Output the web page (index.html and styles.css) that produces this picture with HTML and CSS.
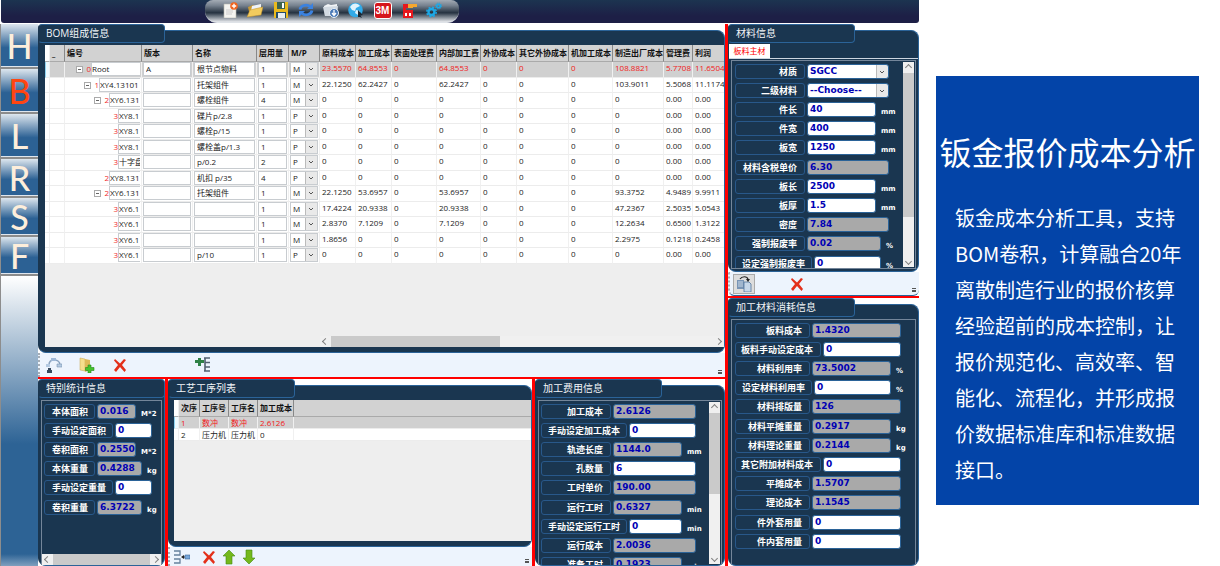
FILE: index.html
```html
<!DOCTYPE html>
<html lang="zh-CN">
<head>
    <meta charset="UTF-8">
    <meta name="viewport" content="width=device-width, initial-scale=1.0">
    <title>钣金报价成本分析</title>
    <link rel="stylesheet" href="styles.css">
</head>
<body>
    <div class="app">
        <header class="topbar">
            <div class="quickbar">
                <button aria-label="新建"><svg viewBox="0 0 16 16"><path d="M2 2h8l4 4v10H2z" fill="#f4f4f0" stroke="#b8b8b0" stroke-width=".6"/><path d="M4 8h7M4 10h7M4 12h6" stroke="#ccc"/><circle cx="12" cy="4" r="3.8" fill="#f0641e"/><path d="M12 1.8v4.4M9.8 4h4.4" stroke="#fff" stroke-width="1.4"/></svg></button>
                <button aria-label="打开"><svg viewBox="0 0 16 16"><path d="M1 5l5-2 2 1 6-2v5L3 14z" fill="#c99a35"/><path d="M5 4l9-2v4L4 9z" fill="#eef3fa"/><path d="M0 15l3-7 13-3-2 8z" fill="#f2cb5e" stroke="#c0902b" stroke-width=".5"/></svg></button>
                <button aria-label="保存"><svg viewBox="0 0 16 16"><path d="M1 0h14v16H1z" fill="#e9b91d"/><path d="M4 0h8v7H4z" fill="#3d6350"/><path d="M9 1h2v5H9z" fill="#fff"/><path d="M3 10h10v6H3z" fill="#244d6b"/><path d="M5 11h7v5H5z" fill="#e8eef0"/></svg></button>
                <button aria-label="刷新"><svg viewBox="0 0 16 16" fill="none" stroke="#3b82e0" stroke-width="2.8"><path d="M2 7.500a6 5 0 0 1 10-3M14 8.500a6 5 0 0 1-10 3"/><path d="M9 7h6V1zM7 9H1v6z" fill="#3b82e0" stroke="none"/></svg></button>
                <button aria-label="导入"><svg viewBox="0 0 16 16"><path d="M1 4l4-2 3 1 6-1v10l-12 2z" fill="#f1f4f7"/><path d="M0 5l15-1-1 10H2z" fill="#d3dbe3"/><circle cx="11" cy="11" r="4.500" fill="#4c7bb8" stroke="#e9f0f7"/><path d="M11 8v5M9 11l2 2.500 2-2.500" stroke="#fff" fill="none" stroke-width="1.300"/></svg></button>
                <button aria-label="网络"><svg viewBox="0 0 16 16"><circle cx="7.500" cy="8" r="7.300" fill="#32aae8"/><path d="M2 5c3-5 8-4 10-1l-4 2-1 3-3-1zM8 8l4 1-2 4-3-2z" fill="#dff2fc"/><path d="M10 8l5 5-2.500.5L14 16l-2-1-2 0z" fill="#1a2734"/></svg></button>
                <button class="logo" aria-label="3M">3M</button>
                <button aria-label="加工"><svg viewBox="0 0 16 16"><path d="M2 2h7v4H5v2h7v8H2z" fill="#e6181d"/><path d="M7 2h9v3h-4v1H7z" fill="#f5a72d"/><path d="M4 11h2v3H4zM8 11h2v3H8z" fill="#fff"/></svg></button>
                <button aria-label="设置"><svg viewBox="0 0 16 16" fill="none" stroke="#1ca8e6"><circle cx="5.500" cy="10" r="3" stroke-width="2.400"/><circle cx="5.500" cy="10" r="4.700" stroke-width="1.500" stroke-dasharray="2 1.700"/><circle cx="12.500" cy="4" r="1.800" stroke-width="1.500"/><circle cx="12.500" cy="4" r="3" stroke-dasharray="1.200 1.150"/></svg></button>
            </div>
        </header>

        <nav class="sidebar">
            <button>H</button>
            <button class="active">B</button>
            <button>L</button>
            <button>R</button>
            <button>S</button>
            <button>F</button>
        </nav>

        <main class="main">
            <section class="block bom">
                <div class="panel">
                    <h2>BOM组成信息</h2>
                    <div class="panel-body">
                        <div class="grid-view">
                            <table id="bom-table"></table>
                            <div class="hscroll bom-scroll"><i class="arrow left"></i><span class="thumb"></span><i class="arrow right"></i></div>
                        </div>
                    </div>
                </div>
                <div class="tools">
                    <button aria-label="结构"><svg viewBox="0 0 16 16"><path d="M3 8c0-4 3-5 5-5s6 1 6 5" fill="none" stroke="#8ba4c0" stroke-width="1.500"/><path d="M5 1h5v3H5z" fill="#9fb9d8"/><path d="M11 7h5v3h-5z" fill="#b4cae2" stroke="#7895b3" stroke-width=".6"/><path d="M0 7h4v3H0z" fill="#b4cae2"/><path d="M2 11h3v2h1v3H1v-3h1z" fill="#36495e"/></svg></button>
                    <button aria-label="添加"><svg viewBox="0 0 16 16"><path d="M1 1l5 1v12l-5-1z" fill="#f6df8c" stroke="#c5a54c" stroke-width=".5"/><path d="M6 2l5 1v10l-5 2z" fill="#dfba58"/><path d="M9 8h3v2.500h3v3h-3V16H9v-2.500H6.500v-3H9z" fill="#45c22c" stroke="#258a19" stroke-width=".6"/></svg></button>
                    <button aria-label="删除"><svg viewBox="0 0 16 16"><path d="M3 2l5 4.500L12 2l2 1-4 5 4 5-1.500 2L8 10l-4 5-2-2 4-5-4-4.500z" fill="#e3301a"/></svg></button>
                    <button class="apart" aria-label="展开"><svg viewBox="0 0 16 16"><path d="M9 1h6M10 5.500h5M10 10h5M9 14h6M10 1v13" stroke="#536171" stroke-width="1.600"/><path d="M3 1h3v2h3v3H6v3H3V6H0V3h3z" fill="#2f8146"/></svg></button>
                    <i class="more"></i>
                </div>
            </section>

            <div class="lower">
                <section class="block">
                    <div class="panel stats">
                        <h2>特别统计信息</h2>
                        <div class="panel-body">
                            <div class="frame frame-col">
                                <form class="fields" id="stats"></form>
                                <div class="hscroll"><i class="arrow left"></i><span class="thumb"></span><i class="arrow right"></i></div>
                            </div>
                        </div>
                    </div>
                </section>
                <section class="block">
                    <div class="panel">
                        <h2>工艺工序列表</h2>
                        <div class="panel-body">
                            <div class="grid-view">
                                <table id="process-table"></table>
                            </div>
                        </div>
                    </div>
                    <div class="tools tools-low">
                        <button aria-label="插入"><svg viewBox="0 0 16 16"><path d="M0 2h6v4H0M0 10h6v4H0" fill="none" stroke="#66819d" stroke-width="1.300"/><path d="M7 8l3-2v4z" fill="#222"/><path d="M9 8h3" stroke="#222"/><path d="M11 6h5v4h-5z" fill="#78a7da" stroke="#3b6797" stroke-width=".6"/></svg></button>
                        <button aria-label="删除"><svg viewBox="0 0 16 16"><path d="M3 2l5 4.500L12 2l2 1-4 5 4 5-1.500 2L8 10l-4 5-2-2 4-5-4-4.500z" fill="#e3301a"/></svg></button>
                        <button aria-label="上移"><svg viewBox="0 0 16 16"><path d="M8 1l6 6h-3v8H5V7H2z" fill="#74b81c" stroke="#458a10" stroke-width=".6"/></svg></button>
                        <button aria-label="下移"><svg viewBox="0 0 16 16"><path d="M8 15l6-6h-3V1H5v8H2z" fill="#74b81c" stroke="#458a10" stroke-width=".6"/></svg></button>
                        <i class="more"></i>
                    </div>
                </section>
                <section class="block">
                    <div class="panel cost">
                        <h2>加工费用信息</h2>
                        <div class="panel-body">
                            <div class="frame">
                                <form class="fields" id="cost"></form>
                                <div class="vscroll"><i class="arrow up"></i><span class="thumb"></span><i class="arrow down"></i></div>
                            </div>
                        </div>
                    </div>
                </section>
            </div>
        </main>

        <aside class="side">
            <section class="block">
                <div class="panel material">
                    <h2>材料信息</h2>
                    <div class="panel-body">
                        <div class="tabs"><button>板料主材</button></div>
                        <div class="frame">
                            <form class="fields" id="material"></form>
                            <div class="vscroll"><i class="arrow up"></i><span class="thumb"></span><i class="arrow down"></i></div>
                        </div>
                    </div>
                </div>
                <div class="tools tools-side">
                    <button class="pressed" aria-label="复制"><svg viewBox="0 0 16 16"><path d="M1 4h7v9H1z" fill="#7894b5"/><path d="M2 6h5M2 8h5M2 10h5" stroke="#c9d8e8"/><path d="M8 6h5l2 2v8H8z" fill="#c6d7ea" stroke="#50749c" stroke-width=".8"/><path d="M4 3c2-3 7-3 8 0" fill="none" stroke="#222" stroke-width="1.200"/><path d="M10 3h4l-2 3z" fill="#222"/></svg></button>
                    <button aria-label="删除"><svg viewBox="0 0 16 16"><path d="M3 2l5 4.500L12 2l2 1-4 5 4 5-1.500 2L8 10l-4 5-2-2 4-5-4-4.500z" fill="#e3301a"/></svg></button>
                    <i class="more"></i>
                </div>
            </section>
            <section class="block">
                <div class="panel usage">
                    <h2>加工材料消耗信息</h2>
                    <div class="panel-body">
                        <div class="frame">
                            <form class="fields" id="usage"></form>
                        </div>
                    </div>
                </div>
            </section>
        </aside>
    </div>

    <article class="promo">
        <h1>钣金报价成本分析</h1>
        <p>钣金成本分析工具，支持BOM卷积，计算融合20年离散制造行业的报价核算经验超前的成本控制，让报价规范化、高效率、智能化、流程化，并形成报价数据标准库和标准数据接口。</p>
    </article>
    <script src="app.js"></script>
</body>
</html>
```

FILE: styles.css
```css
* {
    box-sizing: border-box;
}

body {
    margin: 0;
    height: 100vh;
    display: flex;
    gap: 17px;
    padding-right: 21px;
    overflow: hidden;
    background: #fff;
    font-family: "Open Sans", "Noto Sans CJK SC", sans-serif;
    font-size: 8px;
    color: #222;
}

button,
input,
select {
    font: inherit;
    color: inherit;
    margin: 0;
    padding: 0;
    border: none;
    border-radius: 0;
    background: none;
    outline: none;
}

h1,
h2,
p {
    margin: 0;
    font-weight: 400;
}

svg {
    display: block;
    width: 16px;
    height: 16px;
}

.app {
    flex: 1;
    min-width: 0;
    height: 100vh;
    display: grid;
    grid-template-columns: 38px minmax(0, 1fr) 194px;
    grid-template-rows: 24px minmax(0, 1fr);
}

/* top bar */
.topbar {
    grid-column: 1 / -1;
    height: 23px;
    margin-left: 1px;
    padding-left: 204px;
    border-radius: 0 0 3px 3px;
    background: linear-gradient(#1c3450, #1d1f46 70%);
}

.quickbar {
    width: 254px;
    height: 23px;
    padding: 0 17px 2px;
    display: flex;
    justify-content: space-between;
    align-items: center;
    border-radius: 8px 8px 12px 12px;
    border-bottom: 1px solid #dfe3e8;
    background: linear-gradient(#a4acb5, #77828f 25%, #253240 58%, #7f8892 78%, #e6e8ec);
}

.quickbar .logo {
    width: 18px;
    height: 17px;
    border: 1px solid #fff;
    border-radius: 3px;
    background: #d5161c;
    color: #fff;
    font: bold 10px "Liberation Sans", sans-serif;
}

/* letter buttons */
.sidebar {
    display: flex;
    flex-direction: column;
    border-left: 1px solid #8d8d8d;
    background: linear-gradient(#fff 252px, #2d6395 420px, #2d6395 530px, #7f9fbe);
}

.sidebar button {
    height: 39px;
    border-bottom: 2px solid #8c8c8c;
    background: linear-gradient(#dde6ee, #2c6194 55%);
    box-shadow: inset 0 -1px #dfe6ee;
    color: #fdeedb;
    font: 500 34px/36px Lato, "Liberation Sans", sans-serif;
}

.sidebar button:nth-child(-n+3) {
    height: 45px;
    line-height: 42px;
}

.sidebar .active {
    color: #ff4512;
}

/* panels */
.main {
    display: grid;
    grid-template-rows: minmax(0, 1fr) 189px;
    min-width: 0;
}

.side {
    display: grid;
    grid-template-rows: 272px minmax(0, 1fr);
    border-left: 3px solid #f00;
}

.block {
    display: flex;
    flex-direction: column;
    min-width: 0;
    min-height: 0;
}

.panel {
    flex: 1;
    min-height: 0;
    display: flex;
    flex-direction: column;
}

.panel h2 {
    position: relative;
    z-index: 1;
    width: 127px;
    height: 19px;
    padding-left: 7px;
    border: 1px solid #2b6398;
    border-left-color: #1a3650;
    border-radius: 4px;
    background: #1a3650;
    color: #f2f5f8;
    font-size: 10px;
    line-height: 16px;
}

.panel-body {
    flex: 1;
    min-height: 0;
    margin-top: -13px;
    padding: 14px 0 5px 6px;
    display: flex;
    flex-direction: column;
    border: 1px solid #2b6398;
    border-left-color: #1a3650;
    border-radius: 0 8px 8px 8px;
    background: #1a3650;
}

.lower {
    display: grid;
    grid-template-columns: 127px minmax(0, 1fr) 193px;
    border-top: 2px solid #f00;
    overflow: hidden;
}

.lower .block + .block {
    border-left: 3px solid #f00;
}

.side .block + .block {
    border-top: 2px solid #f00;
}

.lower .panel-body {
    padding-left: 5px;
}

.lower .frame,
.side .frame {
    margin: 0 2px;
}

.stats .panel-body,
.cost .panel-body,
.usage .panel-body {
    padding: 14px 0 0;
}

.stats h2 {
    width: auto;
}

.frame {
    flex: 1;
    min-height: 0;
    display: flex;
    overflow: hidden;
    border: 1px solid #74869a;
    border-bottom: none;
}

.frame-col {
    flex-direction: column;
}

.tabs {
    border-bottom: 1px solid #ccd5e0;
}

.tabs button {
    display: block;
    width: 41px;
    height: 14px;
    background: #fff;
    color: #f00;
    line-height: 12px;
}

.material .panel-body {
    padding: 13px 0 2px;
}

.material .frame {
    margin-top: 1px;
    border-bottom: 1px solid #74869a;
}

/* data grids */
.grid-view {
    flex: 1;
    min-height: 0;
    display: flex;
    flex-direction: column;
    justify-content: space-between;
    overflow: hidden;
    background: #eee;
}

table {
    table-layout: fixed;
    width: 100%;
    border-collapse: separate;
    border-spacing: 0;
    background: #fff;
}

th,
td {
    height: 15px;
    padding: 0 0 0 2px;
    overflow: hidden;
    text-align: left;
    vertical-align: top;
    white-space: nowrap;
    line-height: 12px;
}

th {
    height: 17px;
    border-right: 1px solid #888;
    border-bottom: 1px solid #aaa;
    background: #d2d2d2;
    color: #111;
    vertical-align: middle;
}

td {
    border-right: 1px solid #f0f0f0;
    border-bottom: 1px solid #ececec;
}

th:first-child,
td:first-child {
    background: #fff;
    border-right-color: #eee;
}

th:last-child,
td:last-child {
    border-right: none;
}

.selected td {
    background: #d0d0d0;
    color: #f01818;
}

.selected td:first-child {
    background: #eefaff;
    border-left: 1px solid #8fd3f0;
}

#bom-table tr:nth-child(odd) td {
    height: 16px;
}

#bom-table .edit {
    padding: 0 1px;
}

#process-table td {
    height: 12px;
    line-height: 11px;
}

.edit input,
.edit select {
    display: block;
    width: 100%;
    height: 14px;
    padding: 0 0 2px 2px;
    border: 1px solid #c8ccd0;
    background-color: #fff;
    color: #222;
}

.tree {
    display: flex;
    align-items: center;
    padding-left: 10px;
}

.tree i {
    flex: none;
    width: 7px;
    height: 7px;
    border: 1px solid #aaa;
    background: linear-gradient(#666, #666) center / 3px 1px no-repeat #fff;
}

.tree .leaf {
    visibility: hidden;
}

.tree b {
    flex: none;
    width: 8px;
    text-align: right;
    color: #f02a2a;
    font-weight: 400;
}

.edit .tree input {
    flex: 1;
    min-width: 0;
    padding-left: 0;
    border-right: none;
}

.level-1 { padding-left: 18px; }
.level-2 { padding-left: 28px; }
.level-3 { padding-left: 37px; }

select {
    appearance: none;
    background-image:
        url("data:image/svg+xml,%3Csvg xmlns='http://www.w3.org/2000/svg' viewBox='0 0 12 12'%3E%3Cpath d='M4 5l2 2 2-2' fill='none' stroke='%23555'/%3E%3C/svg%3E"),
        linear-gradient(90deg, #bbb 1px, #e9e9e9 1px);
    background-position: right center;
    background-size: 12px 12px, 12px 100%;
    background-repeat: no-repeat;
}

/* scroll bars */
.hscroll,
.vscroll {
    flex: none;
    display: flex;
    background: #f0f0f0;
}

.hscroll {
    height: 11px;
}

.vscroll {
    width: 11px;
    margin: 1px;
    flex-direction: column;
}

.thumb {
    flex: 1;
    background: #cacaca;
}

.vscroll .thumb {
    flex: 0 1 70%;
}

.cost .vscroll .thumb {
    flex-basis: 50%;
}

.vscroll .down {
    margin-top: auto;
}

.arrow {
    flex: none;
    width: 11px;
    height: 11px;
    display: grid;
    place-items: center;
}

.arrow::before {
    content: "";
    width: 4px;
    height: 4px;
    border: solid #808080;
    border-width: 1px 0 0 1px;
    transform: rotate(45deg);
}

.left::before { transform: rotate(-45deg); }
.right::before { transform: rotate(135deg); }
.down::before { transform: rotate(225deg); }

.bom-scroll {
    margin-left: 275px;
}

.bom-scroll .thumb {
    flex: 0 1 169px;
}

.bom-scroll .right {
    margin-left: auto;
}

/* tool strips */
.tools {
    height: 24px;
    padding-left: 6px;
    display: flex;
    align-items: center;
    gap: 17px;
    border-left: 2px dotted #a5adb6;
    background: #edf4fd;
}

.tools .apart {
    margin-left: 50px;
}

.tools .more {
    margin: auto 3px 3px auto;
    width: 4px;
    height: 4px;
    border-top: 1px solid #555;
    border-bottom: 2px solid #555;
}

.tools-low {
    height: 19px;
    padding-left: 4px;
    gap: 4px;
}

.tools-low button:first-child {
    margin-right: 7px;
}

.tools-side {
    padding-left: 3px;
    gap: 34px;
    border-bottom: 1px solid #2b6398;
    border-radius: 0 0 6px 6px;
}

.pressed {
    padding: 1px 2px;
    border: 1px solid #aaa;
    background: #ddd;
}

/* field lists */
.fields {
    flex: 1;
    min-width: 0;
    padding: 3px 4px 0 3px;
    overflow: hidden;
}

.field {
    display: flex;
    gap: 2px;
    height: 15px;
    margin-bottom: 4px;
}

.field:nth-child(5n) {
    margin-bottom: 5px;
}

.field label {
    flex: none;
    width: 70px;
    padding-right: 7px;
    border: 1px solid #28588a;
    border-radius: 3px;
    color: #fff;
    font: bold 9px/14px "Noto Sans CJK SC", sans-serif;
    text-align: right;
    white-space: nowrap;
}

.field input,
.field select {
    flex: 1;
    min-width: 0;
    height: 15px;
    padding: 0 0 1px 2px;
    border: 1px solid #2b6398;
    border-radius: 3px;
    background-color: #fff;
    color: #0000b4;
    font: bold 9px/12px "DejaVu Sans", sans-serif;
}

.field input[readonly] {
    background: #a9a9a9;
}

.field span {
    flex: none;
    width: 21px;
    padding: 5px 0 0 3px;
    color: #fff;
    font: bold 7px/10px "DejaVu Sans", sans-serif;
}

.field .narrow {
    width: 12px;
}

.stats .fields { padding-left: 2px; padding-right: 3px; }
.stats .field label { width: 51px; padding-right: 6px; }
.stats .field .long { width: 69px; }
.stats .field { margin-right: 6px; }
.stats .field.has-unit { margin-right: 0; }
.stats .field span { width: 20px; }
.stats .field .narrow { width: 14px; }

.material .fields { padding-right: 13px; }
.material .field .long { width: 77px; padding-right: 6px; }
.material .field span { width: 11px; }
.material .field span.narrow { width: 6px; }

.usage .fields { padding-right: 14px; }
.usage .field label { width: 75px; }
.usage .field .long { width: 86px; }
.usage .field .mid { width: 77px; padding-right: 6px; }
.usage .field span { width: 8px; }

.cost .fields { padding-left: 2px; padding-right: 12px; }
.cost .field .long { width: 86px; padding-right: 6px; }
.cost .field span { width: 12px; }

/* blue text card */
.promo {
    flex: none;
    align-self: flex-start;
    width: 263px;
    margin-top: 76px;
    padding: 51px 0 17px;
    background: #0344a8;
    color: #fff;
    font-family: "Noto Sans CJK SC", sans-serif;
}

.promo h1 {
    font-size: 32px;
    line-height: 48px;
    text-align: center;
    white-space: nowrap;
}

.promo p {
    margin-top: 25px;
    padding: 0 14px 0 19px;
    font-size: 20px;
    line-height: 36px;
}
```

FILE: app.js
```js
const bomColumns = [
    ['', 5], ['_', 15], ['编号', 77], ['版本', 51], ['名称', 64], ['层用量', 32], ['M/P', 31],
    ['原料成本', 36], ['加工成本', 36], ['表面处理费', 45], ['内部加工费', 44], ['外协成本', 36],
    ['其它外协成本', 52], ['机加工成本', 44], ['制造出厂成本', 51], ['管理费', 29], ['利润', 0]
];

// level, open, code, version, name, qty, type, material, process, inner, factory, manage, profit
const bomRows = [
    [0, 1, 'Root', 'A', '根节点物料', 1, 'M', '23.5570', '64.8553', '64.8553', '108.8821', '5.7708', '11.6504'],
    [1, 1, 'XY4.13101', '', '托架组件', 1, 'M', '22.1250', '62.2427', '62.2427', '103.9011', '5.5068', '11.1174'],
    [2, 1, 'XY6.131', '', '螺栓组件', 4, 'M', 0, 0, 0, 0, '0.00', '0.00'],
    [3, 0, 'XY8.1', '', '碟片p/2.8', 1, 'P', 0, 0, 0, 0, '0.00', '0.00'],
    [3, 0, 'XY8.1', '', '螺栓p/15', 1, 'P', 0, 0, 0, 0, '0.00', '0.00'],
    [3, 0, 'XY8.1', '', '螺栓盖p/1.3', 1, 'P', 0, 0, 0, 0, '0.00', '0.00'],
    [3, 0, '十字盘', '', 'p/0.2', 2, 'P', 0, 0, 0, 0, '0.00', '0.00'],
    [2, 0, 'XY8.131', '', '机扣 p/35', 4, 'P', 0, 0, 0, 0, '0.00', '0.00'],
    [2, 1, 'XY6.131', '', '托架组件', 1, 'M', '22.1250', '53.6957', '53.6957', '93.3752', '4.9489', '9.9911'],
    [3, 0, 'XY6.1', '', '', 1, 'M', '17.4224', '20.9338', '20.9338', '47.2367', '2.5035', '5.0543'],
    [3, 0, 'XY6.1', '', '', 1, 'M', '2.8370', '7.1209', '7.1209', '12.2634', '0.6500', '1.3122'],
    [3, 0, 'XY6.1', '', '', 1, 'M', '1.8656', 0, 0, '2.2975', '0.1218', '0.2458'],
    [3, 0, 'XY6.1', '', 'p/10', 1, 'P', 0, 0, 0, 0, '0.00', '0.00']
];

const processColumns = [['', 5], ['次序', 21], ['工序号', 29], ['工序名', 29], ['加工成本', 36], ['', 0]];
const processRows = [[1, '数冲', '数冲', '2.6126'], [2, '压力机', '压力机', 0]];

// label, value, kind (r = read only, e = editable, s = select), unit, label size
const fields = {
    stats: [
        ['本体面积', '0.016', 'r', 'M*2'],
        ['手动设定面积', '0', 'e', '', 'long'],
        ['卷积面积', '0.2550', 'r', 'M*2'],
        ['本体重量', '0.4288', 'r', 'kg'],
        ['手动设定重量', '0', 'e', '', 'long'],
        ['卷积重量', '6.3722', 'r', 'kg']
    ],
    cost: [
        ['加工成本', '2.6126', 'r'],
        ['手动设定加工成本', '0', 'e', '', 'long'],
        ['轨迹长度', '1144.0', 'r', 'mm'],
        ['孔数量', '6', 'e'],
        ['工时单价', '190.00', 'r'],
        ['运行工时', '0.6327', 'r', 'min'],
        ['手动设定运行工时', '0', 'e', 'min', 'long'],
        ['运行成本', '2.0036', 'r'],
        ['准备工时', '0.1923', 'r', 'min']
    ],
    material: [
        ['材质', 'SGCC', 's'],
        ['二级材料', '--Choose--', 's'],
        ['件长', '40', 'e', 'mm'],
        ['件宽', '400', 'e', 'mm'],
        ['板宽', '1250', 'e', 'mm'],
        ['材料含税单价', '6.30', 'r'],
        ['板长', '2500', 'e', 'mm'],
        ['板厚', '1.5', 'e', 'mm'],
        ['密度', '7.84', 'r'],
        ['强制报废率', '0.02', 'r', '%'],
        ['设定强制报废率', '0', 'e', '%', 'long']
    ],
    usage: [
        ['板料成本', '1.4320', 'r'],
        ['板料手动设定成本', '0', 'e', '', 'long'],
        ['材料利用率', '73.5002', 'r', '%'],
        ['设定材料利用率', '0', 'e', '%', 'mid'],
        ['材料排版量', '126', 'r'],
        ['材料平摊重量', '0.2917', 'r', 'kg'],
        ['材料理论重量', '0.2144', 'r', 'kg'],
        ['其它附加材料成本', '0', 'e', '', 'long'],
        ['平摊成本', '1.5707', 'r'],
        ['理论成本', '1.1545', 'r'],
        ['件外套用量', '0', 'e'],
        ['件内套用量', '0', 'e']
    ]
};

const head = columns =>
    `<colgroup>${columns.map(c => c[1] ? `<col style="width:${c[1]}px">` : '<col>').join('')}</colgroup>
    <thead><tr>${columns.map(c => `<th>${c[0]}</th>`).join('')}</tr></thead>`;

const edit = (label, value) => `<td class="edit"><input aria-label="${label}" value="${value}"></td>`;

const bomRow = (r, i) => {
    const [level, open, code, version, name, qty, type, material, process, inner, factory, manage, profit] = r;
    const numbers = [material, process, 0, inner, 0, 0, 0, factory, manage, profit];
    return `<tr class="${i === 0 ? 'selected' : ''}"><td></td><td></td>
        <td class="edit"><div class="tree level-${level}"><i class="${open ? '' : 'leaf'}"></i><b>${level}</b><input aria-label="编号" value="${code}"></div></td>
        ${edit('版本', version)}${edit('名称', name)}${edit('层用量', qty)}
        <td class="edit"><select aria-label="M/P"><option>${type}</option></select></td>
        ${numbers.map(n => `<td>${n}</td>`).join('')}</tr>`;
};

document.querySelector('#bom-table').innerHTML =
    head(bomColumns) + `<tbody>${bomRows.map(bomRow).join('')}</tbody>`;

document.querySelector('#process-table').innerHTML =
    head(processColumns) + `<tbody>${processRows.map((r, i) =>
        `<tr class="${i === 0 ? 'selected' : ''}"><td></td>${r.map(v => `<td>${v}</td>`).join('')}<td></td></tr>`).join('')}</tbody>`;

Object.keys(fields).forEach(key => {
    document.querySelector('#' + key).innerHTML = fields[key].map(([label, value, kind, unit, size], i) => {
        const id = `${key}-${i}`;
        const control = kind === 's'
            ? `<select id="${id}"><option>${value}</option></select>`
            : `<input id="${id}" value="${value}" ${kind === 'r' ? 'readonly' : ''}>`;
        const unitClass = unit === '%' || unit === 'kg' ? 'narrow' : '';
        return `<div class="field ${unit ? 'has-unit' : ''}"><label class="${size || ''}" for="${id}">${label}</label>${control}${unit ? `<span class="${unitClass}">${unit}</span>` : ''}</div>`;
    }).join('');
});
```
